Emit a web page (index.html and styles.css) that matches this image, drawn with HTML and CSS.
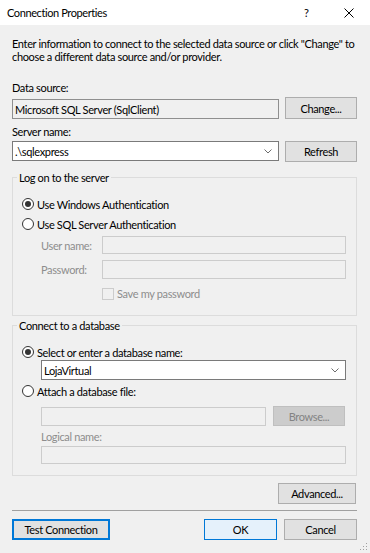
FILE: index.html
```html
<!DOCTYPE html>
<html>
<head>
<meta charset="utf-8">
<link rel="stylesheet" href="styles.css">
</head>
<body>
<div class="dialog">
  <div class="titlebar">
    <span class="title">Connection Properties</span>
    <span class="help">?</span>
    <span class="close"><svg width="10" height="10" viewBox="0 0 10 10"><path d="M0.5 0.5L9.5 9.5M9.5 0.5L0.5 9.5" stroke="#000" stroke-width="1" fill="none"/></svg></span>
  </div>
  <div class="content">
    <p class="intro">Enter information to connect to the selected data source or click "Change" to<br>choose a different data source and/or provider.</p>

    <div class="label top1">Data source:</div>
    <div class="row row1">
      <div class="box readonly">Microsoft SQL Server (SqlClient)</div>
      <div class="btn">Change...</div>
    </div>

    <div class="label top2">Server name:</div>
    <div class="row row2">
      <div class="box combo server">.\sqlexpress<svg class="chev" width="8" height="5" viewBox="0 0 8 5"><path d="M0.5 0.5L4 4L7.5 0.5" stroke="#6d6d6d" fill="none"/></svg></div>
      <div class="btn">Refresh</div>
    </div>

    <fieldset class="group g1">
      <legend>Log on to the server</legend>
      <div class="inner">
        <div class="radio-row"><span class="radio on"></span><span>Use Windows Authentication</span></div>
        <div class="radio-row r2"><span class="radio"></span><span>Use SQL Server Authentication</span></div>
        <div class="creds">
          <span class="dlabel">User name:</span><div class="dbox h18"></div>
          <span class="dlabel">Password:</span><div class="dbox h19"></div>
        </div>
        <div class="check-row"><span class="check"></span><span class="dtext">Save my password</span></div>
      </div>
    </fieldset>

    <fieldset class="group g2">
      <legend>Connect to a database</legend>
      <div class="inner inner2">
        <div class="radio-row"><span class="radio on"></span><span>Select or enter a database name:</span></div>
        <div class="box combo db">LojaVirtual<svg class="chev" width="8" height="5" viewBox="0 0 8 5"><path d="M0.5 0.5L4 4L7.5 0.5" stroke="#6d6d6d" fill="none"/></svg></div>
        <div class="radio-row r3"><span class="radio"></span><span>Attach a database file:</span></div>
        <div class="file-row">
          <div class="dbox file"></div>
          <div class="btn disabled">Browse...</div>
        </div>
        <div class="dlabel logical">Logical name:</div>
        <div class="dbox h18 wide"></div>
      </div>
    </fieldset>

    <div class="adv-row"><div class="btn adv">Advanced...</div></div>
    <div class="sep"></div>
    <div class="bottom-row">
      <div class="btn test">Test Connection</div>
      <div class="spacer"></div>
      <div class="btn ok">OK</div>
      <div class="btn cancel">Cancel</div>
    </div>
  </div>
  <svg class="grip" width="8" height="8" viewBox="0 0 8 8">
    <rect x="6" y="0" width="1" height="1" fill="#a0a0a0"/>
    <rect x="3" y="3" width="1" height="1" fill="#a0a0a0"/>
    <rect x="6" y="3" width="1" height="1" fill="#a0a0a0"/>
    <rect x="0" y="6" width="1" height="1" fill="#a0a0a0"/>
    <rect x="3" y="6" width="1" height="1" fill="#a0a0a0"/>
    <rect x="6" y="6" width="1" height="1" fill="#a0a0a0"/>
  </svg>
</div>
</body>
</html>
```

FILE: styles.css
```css
* { box-sizing: border-box; }
html, body { margin: 0; padding: 0; }
body {
  width: 370px;
  height: 553px;
  overflow: hidden;
  background: #f0f0f0;
  font-family: Lato, "Noto Sans", sans-serif;
  font-size: 11px;
  letter-spacing: -0.35px;
  color: #000;
}
.dialog {
  position: relative;
  width: 370px;
  height: 553px;
  display: flex;
  flex-direction: column;
}
.titlebar {
  height: 25px;
  background: #fff;
  display: flex;
  align-items: center;
  padding-left: 7px;
}
.title { flex: 1; font-size: 11px; letter-spacing: -0.4px; }
.help { width: 10px; margin-right: 30px; font-size: 11px; }
.close { width: 10px; height: 10px; margin-right: 16px; display: flex; }

.content {
  padding: 0 13px 0 12px;
  display: flex;
  flex-direction: column;
}
.intro {
  margin: 12px 0 0;
  line-height: 13px;
  white-space: nowrap;
}
.label { line-height: 13px; }
.top1 { margin-top: 18px; }
.top2 { margin-top: 6px; }
.row { display: flex; gap: 6px; margin-top: 3px; }
.row1 { height: 22px; align-items: flex-end; }
.row2 { height: 21px; align-items: flex-start; }

.box {
  height: 20px;
  width: 267px;
  border: 1px solid #7a7a7a;
  background: #fff;
  padding-left: 2px;
  display: flex;
  align-items: center;
  line-height: 13px;
}
.box.readonly { background: #f0f0f0; border-color: #8f8f8f; }
.combo { position: relative; }
.chev { position: absolute; right: 6px; top: 7px; }

.btn {
  height: 22px;
  width: 72px;
  background: #e1e1e1;
  border: 1px solid #adadad;
  display: flex;
  align-items: center;
  justify-content: center;
  line-height: 13px;
}
.row2 .btn { height: 21px; }
.btn.disabled { background: #cccccc; border-color: #bfbfbf; color: #838383; height: 20px; }

.group {
  margin: 0;
  padding: 0;
  border: 1px solid #dcdcdc;
  min-width: 0;
}
.group legend {
  margin-left: 4px;
  padding: 0 2px;
  line-height: 13px;
}
.g1 { margin-top: 9px; }
.g2 { margin-top: 3px; }
.inner {
  padding: 12px 11px 15px 9px;
  display: flex;
  flex-direction: column;
}
.inner2 { padding-bottom: 11px; }

.radio-row {
  height: 16px;
  display: flex;
  align-items: center;
  gap: 3px;
  line-height: 13px;
}
.radio-row.r2 { margin-top: 4px; }
.radio-row.r3 { margin-top: 3px; }
.radio {
  width: 12px;
  height: 12px;
  border: 1px solid #333;
  border-radius: 50%;
  background: #fff;
  display: flex;
  align-items: center;
  justify-content: center;
}
.radio.on::after {
  content: "";
  width: 6px;
  height: 6px;
  border-radius: 50%;
  background: #333;
}

.creds {
  margin: 4px 0 0 19px;
  display: grid;
  grid-template-columns: 61px 244px;
  row-gap: 6px;
  align-items: center;
}
.dlabel { color: #8d8d8d; line-height: 13px; }
.dbox {
  border: 1px solid #cccccc;
  background: #f0f0f0;
}
.h18 { height: 18px; }
.h19 { height: 19px; }
.check-row {
  margin: 8px 0 0 80px;
  height: 13px;
  display: flex;
  align-items: center;
  gap: 3px;
  line-height: 13px;
}
.check {
  width: 12px;
  height: 12px;
  border: 1px solid #cccccc;
  background: #f0f0f0;
}
.dtext { color: #8d8d8d; }

.db {
  margin-left: 19px;
  width: 305px;
}
.file-row {
  margin: 7px 0 0 19px;
  display: flex;
  gap: 7px;
  align-items: flex-end;
}
.file { width: 225px; height: 19px; }
.logical { margin: 4px 0 0 19px; }
.wide { margin: 3px 0 0 19px; width: 305px; }

.adv-row { margin-top: 7px; display: flex; justify-content: flex-end; padding-right: 1px; }
.adv { width: 78px; height: 21px; }
.sep { margin-top: 6px; height: 1px; background: #a0a0a0; }
.bottom-row { margin-top: 8px; display: flex; }
.bottom-row .btn { height: 21px; }
.spacer { flex: 1; }
.test { width: 98px; border: 2px solid #0078d7; }
.ok { width: 73px; background: #e5f1fb; border-color: #0078d7; margin-right: 7px; }
.cancel { width: 73px; }

.grip { position: absolute; right: 2px; bottom: 2px; }
```
